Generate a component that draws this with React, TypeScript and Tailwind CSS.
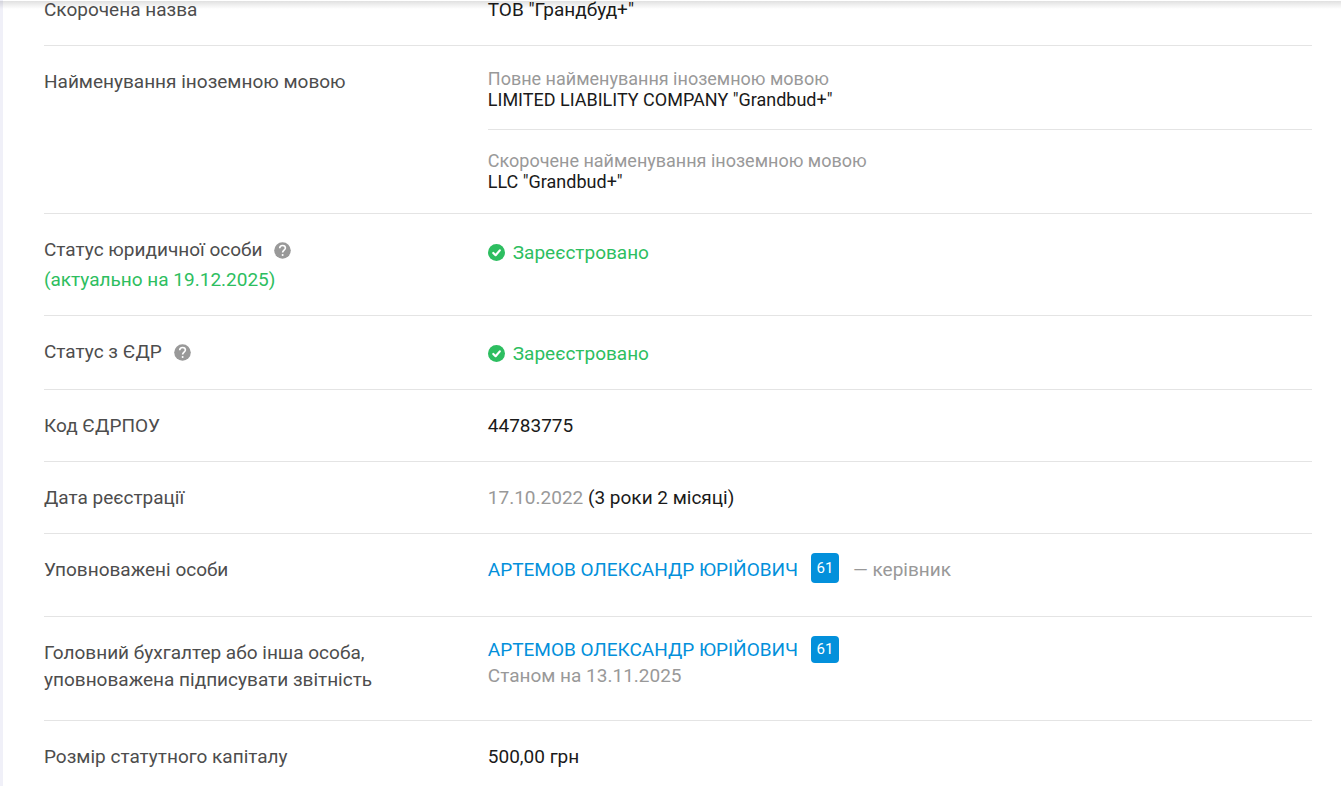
import { ReactNode } from "react";

interface RowProps {
  label: ReactNode;
  className?: string;
  valueClassName?: string;
  children: ReactNode;
}

function Row({ label, className = "pt-[22px]", valueClassName = "pb-[22px]", children }: RowProps) {
  return (
    <div className={`flex border-b border-[#e4e4e4] last:border-b-0 ${className}`}>
      <dt className="w-[35%] shrink-0 pb-[22px] text-[#4d4d4d]">{label}</dt>
      <dd className={`min-w-0 flex-1 text-[#1a1a1a] ${valueClassName}`}>{children}</dd>
    </div>
  );
}

function HelpIcon() {
  return (
    <button type="button" aria-label="Довідка" className="ml-3 inline-block align-[-3px]">
      <svg className="block size-[17px]" viewBox="0 0 17 17" fill="none">
        <circle cx="8.5" cy="8.5" r="8.3" fill="#999" />
        <path
          d="M5.7 6.3C5.7 4.6 6.9 3.5 8.6 3.5S11.4 4.6 11.4 6.1C11.4 8.1 8.6 8.3 8.6 10.6"
          stroke="#fff"
          strokeWidth="1.6"
        />
        <circle cx="8.6" cy="13" r="1" fill="#fff" />
      </svg>
    </button>
  );
}

function Registered() {
  return (
    <span className="flex items-center gap-2 text-[#2dbe60]">
      <svg className="size-[17px] shrink-0" viewBox="0 0 17 17" fill="none">
        <circle cx="8.5" cy="8.5" r="8.5" fill="#2dbe60" />
        <path
          d="M5.3 9L7.6 11.2L11.8 6.4"
          stroke="#fff"
          strokeWidth="2.2"
          strokeLinecap="round"
          strokeLinejoin="round"
        />
      </svg>
      Зареєстровано
    </span>
  );
}

function Person() {
  return (
    <a href="#person" className="text-[#0390db]">
      АРТЕМОВ ОЛЕКСАНДР ЮРІЙОВИЧ
    </a>
  );
}

function Badge({ className }: { className: string }) {
  return (
    <a
      href="#relations"
      className={`ml-[13px] w-7 rounded bg-[#0390db] text-center text-[15px] text-white ${className}`}
    >
      61
    </a>
  );
}

export default function App() {
  return (
    <div className="relative min-h-screen border-l-[3px] border-[#f0f0f8] bg-white pr-[29px] pl-[41px] font-[Roboto,sans-serif] text-[19px] leading-[27px]">
      {/* shadow of the sticky header */}
      <div className="absolute top-px -left-[3px] right-0 h-2 bg-linear-to-b from-black/12 to-transparent" />

      <dl>
        <Row
          label="Скорочена назва"
          className="pb-1 leading-[19px]"
        >
          ТОВ "Грандбуд+"
        </Row>

        <Row label="Найменування іноземною мовою" valueClassName="text-[18px] leading-[21px]">
          <div className="border-b border-[#e4e4e4] pb-[19px]">
            <p className="text-[#999]">Повне найменування іноземною мовою</p>
            <p>LIMITED LIABILITY COMPANY "Grandbud+"</p>
          </div>
          <div className="pt-5 pb-[21px]">
            <p className="text-[#999]">Скорочене найменування іноземною мовою</p>
            <p>LLC "Grandbud+"</p>
          </div>
        </Row>

        <Row
          label={
            <>
              Статус юридичної особи
              <HelpIcon />
              <p className="mt-[3px] text-[#2dbe60]">(актуально на 19.12.2025)</p>
            </>
          }
          valueClassName="pt-[3px]"
        >
          <Registered />
        </Row>

        <Row
          label={
            <>
              Статус з ЄДР
              <HelpIcon />
            </>
          }
          valueClassName="pt-[2px] pb-[22px]"
        >
          <Registered />
        </Row>

        <Row label="Код ЄДРПОУ">44783775</Row>

        <Row label="Дата реєстрації">
          <span className="text-[#999]">17.10.2022</span> (3 роки 2 місяці)
        </Row>

        <Row
          label={<span className="block pt-[3px]">Уповноважені особи</span>}
          className="pt-[19px]"
          valueClassName="pb-[33px]"
        >
          <div className="flex items-end">
            <Person />
            <Badge className="leading-[30px]" />
            <span className="ml-[14px] text-[#999]">— керівник</span>
          </div>
        </Row>

        <Row
          label={
            <span className="block pt-[3px]">
              Головний бухгалтер або інша особа,
              <br />
              уповноважена підписувати звітність
            </span>
          }
          className="pt-[19px]"
          valueClassName="pb-[32px]"
        >
          <div className="flex items-center">
            <Person />
            <Badge className="leading-[27px]" />
          </div>
          <p className="text-[#999] leading-[25px]">Станом на 13.11.2025</p>
        </Row>

        <Row label="Розмір статутного капіталу" valueClassName="pb-0">
          500,00 грн
        </Row>
      </dl>
    </div>
  );
}
